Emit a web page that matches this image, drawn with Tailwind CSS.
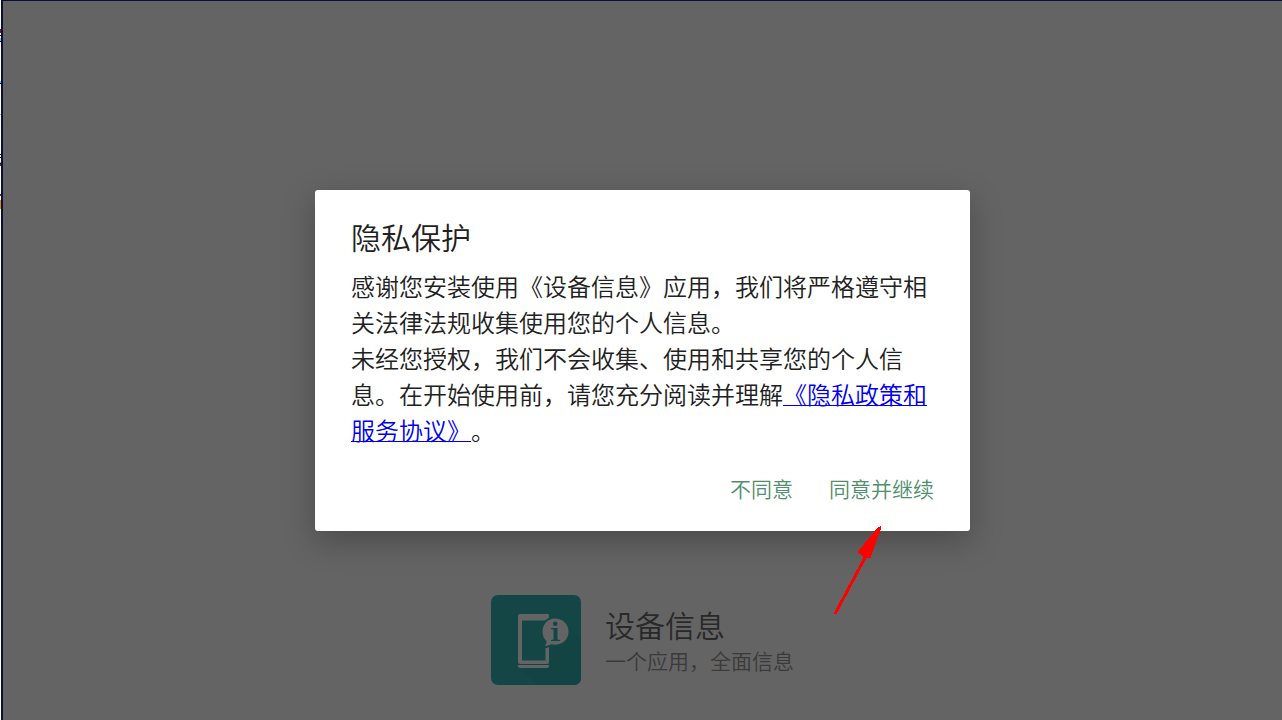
<!DOCTYPE html>
<html lang="zh-CN">

<head>
	<title>设备信息</title>
	<meta charset="UTF-8">
	<meta name="viewport" content="width=device-width, initial-scale=1.0">
	<script src="https://cdn.jsdelivr.net/npm/@tailwindcss/browser@4"></script>
</head>

<body class="flex h-screen overflow-hidden bg-white font-['Noto_Sans_CJK_SC',sans-serif] font-[350] [text-spacing-trim:space-all]">
	<!-- desktop behind the window -->
	<svg class="h-full w-px shrink-0" viewBox="0 0 1 720" preserveAspectRatio="xMinYMin slice" shape-rendering="crispEdges">
		<path fill="#7a1248" d="M0 29h1v4h-1z" />
		<path fill="#0b1240" d="M0 35h1v1h-1zM0 41h1v1h-1zM0 83h1v1h-1zM0 154h1v1h-1zM0 157h1v1h-1zM0 163h1v1h-1z" />
		<path fill="#6cc5f8" d="M0 38h1v3h-1zM0 81h1v2h-1zM0 114h1v1h-1zM0 162h1v1h-1z" />
		<path fill="#8a1c2c" d="M0 164h1v2h-1zM0 194h1v2h-1z" />
		<path fill="#e08a10" d="M0 200h1v9h-1z" />
	</svg>
	<div class="relative flex min-w-0 flex-1 flex-col justify-end border-t border-l-2 border-[#0b0f38] bg-[#646464]">
		<!-- splash -->
		<footer class="flex items-end justify-center gap-6 pb-[35px]">
			<svg class="size-[90px]" viewBox="0 0 90 90">
				<rect width="90" height="90" rx="7" fill="#144646" />
				<path fill="#134444" d="M30 74L60 45L77 30L90 43V83a7 7 0 0 1-7 7H46z" />
				<path fill="#144646" d="M31 26H55V66H31z" />
				<path fill="#646464" fill-rule="evenodd"
					d="M29 19H57q1 0 1 2V67q0 2-2 2H29q-2 0-2-2V21q0-2 2-2zM31 25.500V65.500H54.500V25.500z" />
				<path fill="#646464" d="M27 70H58v1q0 2-2 2H29q-2 0-2-2z" />
				<path fill="#646464" stroke="#144646" stroke-width="2"
					d="M64 22.500C56.500 22.500 50.500 28.500 50.500 36.500C50.500 41 52 44 54.500 46.500C54.500 49 53.500 50.500 51 52.500C54.500 52.500 57.500 51.500 60 50.300C70 52.500 78.500 46 78.500 36.500C78.500 28.500 72 22.500 64 22.500z" />
				<circle cx="64.200" cy="28.800" r="2.300" fill="#144646" />
				<path fill="#144646" d="M60 33H66.500V44.500L69 45V46H60V45L62.500 44.500V34.500L60 34z" />
			</svg>
			<div class="pb-[7px]">
				<h1 class="text-[30px] leading-9 text-[#292929]">设备信息</h1>
				<p class="text-[21px] leading-9 text-[#3a3a3a]">一个应用，全面信息</p>
			</div>
		</footer>

		<!-- privacy dialog -->
		<div class="absolute inset-0 flex items-center justify-center">
			<section role="dialog" aria-labelledby="dialog-title"
				class="w-full max-w-[655px] rounded-[3px] bg-white px-9 pt-[26px] pb-[22px] text-[#212121] shadow-[0_10px_32px_rgba(0,0,0,0.26)]">
				<h2 id="dialog-title" class="text-[30px] leading-10">隐私保护</h2>
				<p class="mt-3 text-2xl leading-9">
					感谢您安装使用《设备信息》应用，我们将严格遵守相关法律法规收集使用您的个人信息。<br>
					未经您授权，我们不会收集、使用和共享您的个人信息。在开始使用前，请您充分阅读并理解<a href="#" class="text-[#0000ee] underline decoration-1">《隐私政策和服务协议》</a>。
				</p>
				<div class="mt-[19px] flex justify-end gap-9 text-[21px] leading-[42px] text-[#4f8f6c]">
					<button type="button">不同意</button>
					<button type="button">同意并继续</button>
				</div>
			</section>
		</div>
	</div>

	<!-- arrow pointing at the agree button -->
	<svg class="pointer-events-none absolute top-[526px] left-[833px] h-[90px] w-[50px]" viewBox="0 0 50 90" shape-rendering="crispEdges">
		<path d="M2 88L34 28" stroke="#f00" stroke-width="3" />
		<path fill="#f00" stroke="#f00" d="M47 1L45 2L25 26L32 31L37 32L47 4z" />
	</svg>
</body>

</html>
